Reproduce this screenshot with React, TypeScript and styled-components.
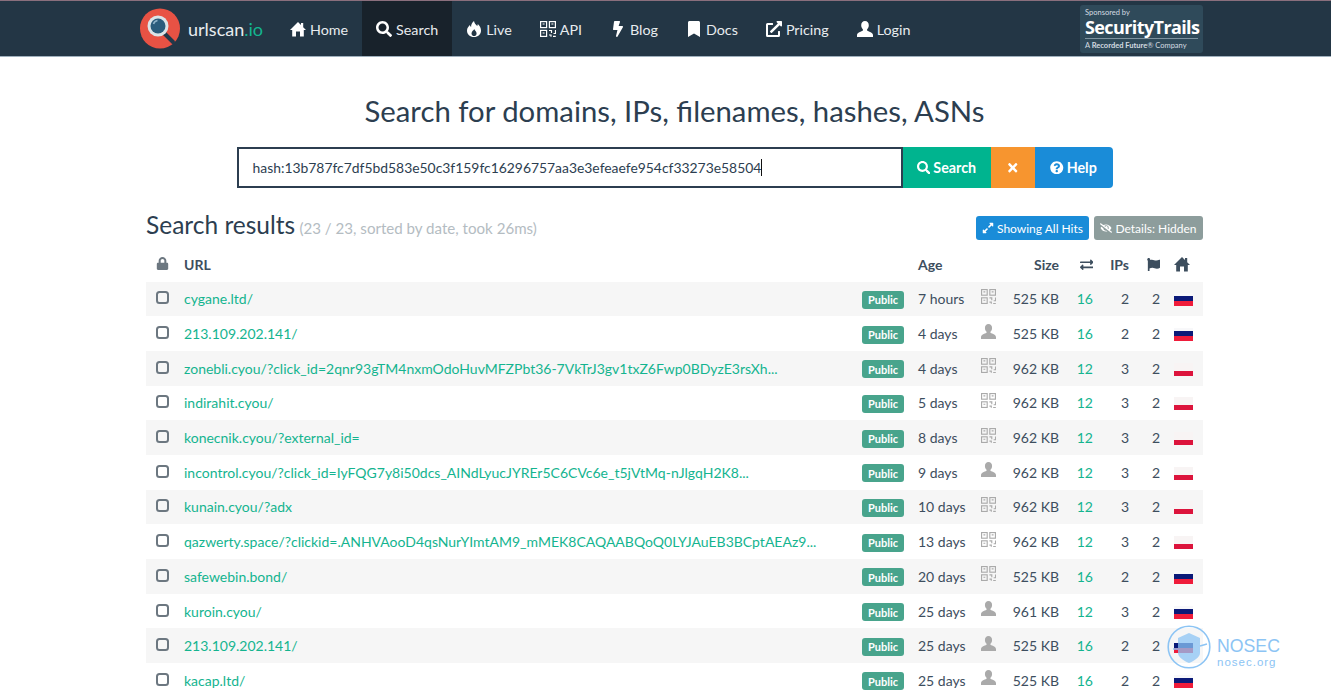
import styled, { createGlobalStyle } from 'styled-components';
import { FaBolt, FaBookmark, FaExpandAlt, FaExchangeAlt, FaExternalLinkAlt, FaEyeSlash, FaFlag, FaLock, FaQuestionCircle, FaSearch, FaTimes } from 'react-icons/fa';

const GlobalStyle = createGlobalStyle`
    html, body {
        margin: 0;
        height: 697px;
        overflow: hidden;
        background: #fff;
        font-family: Lato, "Open Sans", sans-serif;
        color: #2c3e50;
    }
`;

const NavBar = styled.nav`
    display: flex;
    align-items: stretch;
    height: 55px;
    padding: 0 128px 0 140px;
    background: #233645;
    border-top: 1px solid #8a6f7d;
    border-bottom: 1px solid #9fb0bd;
`;

const Brand = styled.div`
    display: flex;
    align-items: center;
    gap: 8px;
    width: 136px;
    font-size: 18px;
    color: #e8ecef;
`;

const BrandAccent = styled.span`
    color: #14b48f;
`;

const NavItem = styled.div<{ active?: boolean }>`
    display: flex;
    align-items: center;
    gap: 4px;
    padding: 1px 14px 0;
    font-size: 14.3px;
    color: #e8ecef;
    background: ${props => props.active ? '#18222b' : 'transparent'};

    svg {
        width: 16px;
        height: 16px;
        color: #fff;
    }
`;

const Sponsor = styled.div`
    display: flex;
    flex-direction: column;
    align-self: flex-start;
    width: 123px;
    height: 48px;
    margin: 4px 0 0 auto;
    padding: 3px 5px;
    box-sizing: border-box;
    border-radius: 3px;
    background: #2f4a5a;
    color: #fff;
`;

const SponsorSmall = styled.div`
    font-size: 7.5px;
    line-height: 9px;
    color: #d5dde2;
    white-space: nowrap;
`;

const SponsorName = styled.div`
    font-family: "Open Sans", sans-serif;
    font-size: 18px;
    line-height: 21px;
    font-weight: 700;
    letter-spacing: -0.6px;
    border-bottom: 1px solid #7d929f;
    margin-bottom: 2px;
    white-space: nowrap;
`;

const Container = styled.main`
    width: 1057px;
    margin-left: 146px;
`;

const Title = styled.h1`
    margin: 35px 0 17px;
    text-align: center;
    font-size: 29.3px;
    line-height: 38px;
    font-weight: 400;
    color: #2c3e50;
`;

const SearchBar = styled.div`
    display: flex;
    justify-content: center;
    height: 41px;
`;

const SearchInput = styled.div`
    display: flex;
    align-items: center;
    width: 666px;
    padding-left: 14px;
    box-sizing: border-box;
    border: 2px solid #2c3e50;
    font-size: 13.9px;
    color: #2c3e50;
`;

const Caret = styled.span`
    width: 1px;
    height: 17px;
    background: #111;
`;

const SearchButton = styled.div<{ color: string; width: number; last?: boolean }>`
    display: flex;
    align-items: center;
    justify-content: center;
    gap: 3px;
    width: ${props => props.width}px;
    font-size: 14.3px;
    font-weight: 700;
    color: #fff;
    background: ${props => props.color};
    border-radius: ${props => props.last ? '0 4px 4px 0' : '0'};

    svg {
        font-size: 13.5px;
    }
`;

const ResultsHeader = styled.div`
    display: flex;
    align-items: center;
    justify-content: space-between;
    height: 30px;
    margin-top: 25px;
    margin-bottom: 4px;
`;

const ResultsTitle = styled.h2`
    margin: 0 0 8px;
    font-size: 24.5px;
    font-weight: 400;
    color: #2c3e50;
`;

const ResultsMeta = styled.small`
    font-size: 15.1px;
    margin-left: -2px;
    color: #b4bcc2;
`;

const ToggleGroup = styled.div`
    display: flex;
    gap: 5px;
`;

const Toggle = styled.div<{ color: string; width: number }>`
    display: flex;
    align-items: center;
    justify-content: center;
    gap: 3px;
    width: ${props => props.width}px;
    height: 24px;
    font-size: 12px;
    color: #fff;
    background: ${props => props.color};
    border-radius: 3px;
`;

const Row = styled.div<{ striped?: boolean; header?: boolean }>`
    display: grid;
    grid-template-columns: 38px 678px 56px 63px 20px 58px 34px 36px 31px 43px;
    align-items: center;
    height: ${props => props.header ? '34.5px' : '34.7px'};
    font-size: 14px;
    font-weight: ${props => props.header ? 700 : 400};
    color: #3d4e5e;
    background: ${props => props.striped ? '#f6f6f6' : 'transparent'};
`;

const LockCell = styled.div`
    display: flex;
    padding-left: 10px;
    margin-top: -2px;
    color: #6c7780;
    font-size: 13px;
`;

const UrlCell = styled.div`
    color: #14b48f;
    white-space: nowrap;
`;

const Badge = styled.span`
    display: flex;
    align-items: center;
    justify-content: center;
    width: 42px;
    height: 18px;
    margin-top: 2px;
    font-size: 11px;
    font-weight: 700;
    color: #fff;
    background: #48a48c;
    border-radius: 3px;
`;

const Method = styled.div`
    display: flex;
    color: #aaa;
    font-size: 15px;
    margin-top: -5px;
`;

const RightCell = styled.div<{ accent?: boolean }>`
    text-align: right;
    color: ${props => props.accent ? '#14b48f' : 'inherit'};

    svg {
        display: block;
        margin-left: auto;
        font-size: 13.5px;
    }
`;

const FlagCell = styled.div`
    display: flex;
    padding-left: 14px;

    svg {
        font-size: 16px;
    }
`;

const Flag = styled.span<{ top: string; middle: string; bottom: string }>`
    display: block;
    width: 19px;
    height: 13px;
    margin-top: 2px;
    background: linear-gradient(${props => props.top} 0 23%, ${props => props.middle} 23% 62%, ${props => props.bottom} 62%);
`;

const Watermark = styled.div`
    position: absolute;
    left: 1167px;
    top: 625px;
    display: flex;
    gap: 6px;
    color: #8cc4f4;
`;

const WatermarkText = styled.div`
    display: flex;
    flex-direction: column;
    justify-content: center;
    font-family: "Liberation Sans", sans-serif;
    height: 44px;
    padding-top: 5px;
`;

const WatermarkName = styled.div`
    font-size: 17.7px;
    line-height: 19px;
`;

const WatermarkSite = styled.div`
    font-size: 11.5px;
    line-height: 12px;
    letter-spacing: 1px;
`;

const Logo = () => (
    <svg width="40" height="41" viewBox="0 0 40 41">
        <circle cx="20" cy="20.5" r="20" fill="#e85244" />
        <path d="M24 25l9 9" stroke="#22384a" strokeWidth="4" strokeLinecap="round" />
        <circle cx="18" cy="18" r="10.5" fill="#dbe4e8" />
        <circle cx="18" cy="18" r="7.5" fill="#2b5c7c" />
        <path d="M13.5 16a5 5 0 0 1 4-3.5" stroke="#8fb2c8" strokeWidth="1.6" fill="none" />
    </svg>
);

const Shield = () => (
    <svg width="44" height="44" viewBox="0 0 44 44">
        <circle cx="22" cy="22" r="20.8" fill="none" stroke="#8cc4f4" strokeWidth="1.6" />
        <path d="M11 13l11-5 11 5v15c0 4-6 8-11 10-5-2-11-6-11-10z" fill="#8cc4f4" fillOpacity="0.75" />
        <path d="M6 24h5M33 21l7-2" stroke="#8cc4f4" strokeWidth="1.5" />
    </svg>
);

const HomeIcon = () => (
    <svg width="1em" height="1em" viewBox="0 0 16 16" fill="currentColor">
        <path d="M8 1l3 3V2h2.2v4.2L16 9h-2.2v6.5H10V10.5H6v5H2.2V9H0z" />
    </svg>
);

const UserIcon = () => (
    <svg width="1em" height="1em" viewBox="0 0 16 16" fill="currentColor">
        <path d="M8 0c2.4 0 3.8 1.8 3.8 4.2 0 1.7-.7 3.2-1.7 4v1.2c0 .6 5.9 1.6 5.9 4.6v2H0v-2c0-3 5.9-4 5.9-4.6V8.2c-1-.8-1.7-2.3-1.7-4C4.2 1.8 5.6 0 8 0z" />
    </svg>
);

const QrIcon = () => (
    <svg width="1em" height="1em" viewBox="0 0 16 16" fill="none" stroke="currentColor" strokeWidth="1.2">
        <rect x=".6" y=".6" width="6" height="6" />
        <rect x="9.4" y=".6" width="6" height="6" />
        <rect x=".6" y="9.4" width="6" height="6" />
        <path d="M2.6 3h2M11.4 3h2M2.6 12h2M9 9.5h2.5v2.5M15.5 9v3.5h-2M9 14h2v1.8M13 15.4h2.8" />
    </svg>
);

const FlameIcon = () => (
    <svg width="1em" height="1em" viewBox="0 0 16 16" fill="currentColor" fillRule="evenodd">
        <path d="M8 0c.5 2.5 2 3.5 3.2 5 .4-.6.6-1.2.6-2 2 1.8 3.2 4 3.2 6.5C15 13.5 12 16 8 16s-7-2.5-7-6.5c0-2.5 1.5-4 2.8-5.5.3 1 .7 1.6 1.3 2C5 3.5 6 1.5 8 0zM8.2 8c-.3 1.2-2.7 2.2-2.7 4.4 0 1.5 1.1 2.6 2.6 2.6s2.5-1.1 2.5-2.6c0-2-2-3-2.4-4.4z" />
    </svg>
);

const CheckIcon = () => (
    <svg width="13" height="13" viewBox="0 0 13 13" fill="none" stroke="currentColor" strokeWidth="2">
        <rect x="1" y="1" width="11" height="11" rx="2.5" />
    </svg>
);

const russia = { top: '#f8f8fa', middle: '#0b1a78', bottom: '#ef1c3a' };
const poland = { top: '#f8f4f4', middle: '#f8f4f4', bottom: '#dc143c' };

const rows = [
    { url: 'cygane.ltd/', age: '7 hours', scan: 'qr', size: '525 KB', reqs: 16, ips: 2, countries: 2, flag: russia },
    { url: '213.109.202.141/', age: '4 days', scan: 'user', size: '525 KB', reqs: 16, ips: 2, countries: 2, flag: russia },
    { url: 'zonebli.cyou/?click_id=2qnr93gTM4nxmOdoHuvMFZPbt36-7VkTrJ3gv1txZ6Fwp0BDyzE3rsXh...', age: '4 days', scan: 'qr', size: '962 KB', reqs: 12, ips: 3, countries: 2, flag: poland },
    { url: 'indirahit.cyou/', age: '5 days', scan: 'qr', size: '962 KB', reqs: 12, ips: 3, countries: 2, flag: poland },
    { url: 'konecnik.cyou/?external_id=', age: '8 days', scan: 'qr', size: '962 KB', reqs: 12, ips: 3, countries: 2, flag: poland },
    { url: 'incontrol.cyou/?click_id=IyFQG7y8i50dcs_AINdLyucJYREr5C6CVc6e_t5jVtMq-nJlgqH2K8...', age: '9 days', scan: 'user', size: '962 KB', reqs: 12, ips: 3, countries: 2, flag: poland },
    { url: 'kunain.cyou/?adx', age: '10 days', scan: 'qr', size: '962 KB', reqs: 12, ips: 3, countries: 2, flag: poland },
    { url: 'qazwerty.space/?clickid=.ANHVAooD4qsNurYImtAM9_mMEK8CAQAABQoQ0LYJAuEB3BCptAEAz9...', age: '13 days', scan: 'qr', size: '962 KB', reqs: 12, ips: 3, countries: 2, flag: poland },
    { url: 'safewebin.bond/', age: '20 days', scan: 'qr', size: '525 KB', reqs: 16, ips: 2, countries: 2, flag: russia },
    { url: 'kuroin.cyou/', age: '25 days', scan: 'user', size: '961 KB', reqs: 12, ips: 3, countries: 2, flag: russia },
    { url: '213.109.202.141/', age: '25 days', scan: 'user', size: '525 KB', reqs: 16, ips: 2, countries: 2, flag: russia },
    { url: 'kacap.ltd/', age: '25 days', scan: 'user', size: '525 KB', reqs: 16, ips: 2, countries: 2, flag: russia },
];

export default function App() {
    return (
        <>
            <GlobalStyle />
            <NavBar>
                <Brand><Logo /><span>urlscan<BrandAccent>.io</BrandAccent></span></Brand>
                <NavItem><HomeIcon />Home</NavItem>
                <NavItem active><FaSearch />Search</NavItem>
                <NavItem><FlameIcon />Live</NavItem>
                <NavItem><QrIcon />API</NavItem>
                <NavItem><FaBolt />Blog</NavItem>
                <NavItem><FaBookmark />Docs</NavItem>
                <NavItem><FaExternalLinkAlt />Pricing</NavItem>
                <NavItem><UserIcon />Login</NavItem>
                <Sponsor>
                    <SponsorSmall>Sponsored by</SponsorSmall>
                    <SponsorName>SecurityTrails</SponsorName>
                    <SponsorSmall>A <b>Recorded Future</b>® Company</SponsorSmall>
                </Sponsor>
            </NavBar>
            <Container>
                <Title>Search for domains, IPs, filenames, hashes, ASNs</Title>
                <SearchBar>
                    <SearchInput>hash:13b787fc7df5bd583e50c3f159fc16296757aa3e3efeaefe954cf33273e58504<Caret /></SearchInput>
                    <SearchButton color="#00b48f" width={88}><FaSearch />Search</SearchButton>
                    <SearchButton color="#f7952f" width={44}><FaTimes /></SearchButton>
                    <SearchButton color="#1a8cd8" width={78} last><FaQuestionCircle />Help</SearchButton>
                </SearchBar>
                <ResultsHeader>
                    <ResultsTitle>Search results <ResultsMeta>(23 / 23, sorted by date, took 26ms)</ResultsMeta></ResultsTitle>
                    <ToggleGroup>
                        <Toggle color="#1a8cd8" width={113}><FaExpandAlt />Showing All Hits</Toggle>
                        <Toggle color="#8d9d9c" width={109}><FaEyeSlash />Details: Hidden</Toggle>
                    </ToggleGroup>
                </ResultsHeader>
                <Row header>
                    <LockCell><FaLock /></LockCell>
                    <div>URL</div>
                    <div />
                    <div>Age</div>
                    <div />
                    <RightCell>Size</RightCell>
                    <RightCell><FaExchangeAlt /></RightCell>
                    <RightCell>IPs</RightCell>
                    <RightCell><FaFlag /></RightCell>
                    <FlagCell><HomeIcon /></FlagCell>
                </Row>
                {rows.map((r, i) =>
                    <Row key={i} striped={i % 2 === 0}>
                        <LockCell><CheckIcon /></LockCell>
                        <UrlCell>{r.url}</UrlCell>
                        <Badge>Public</Badge>
                        <div>{r.age}</div>
                        <Method>{r.scan === 'qr' ? <QrIcon /> : <UserIcon />}</Method>
                        <RightCell>{r.size}</RightCell>
                        <RightCell accent>{r.reqs}</RightCell>
                        <RightCell>{r.ips}</RightCell>
                        <RightCell>{r.countries}</RightCell>
                        <FlagCell><Flag {...r.flag} /></FlagCell>
                    </Row>
                )}
            </Container>
            <Watermark>
                <Shield />
                <WatermarkText>
                    <WatermarkName>NOSEC</WatermarkName>
                    <WatermarkSite>nosec.org</WatermarkSite>
                </WatermarkText>
            </Watermark>
        </>
    );
}
